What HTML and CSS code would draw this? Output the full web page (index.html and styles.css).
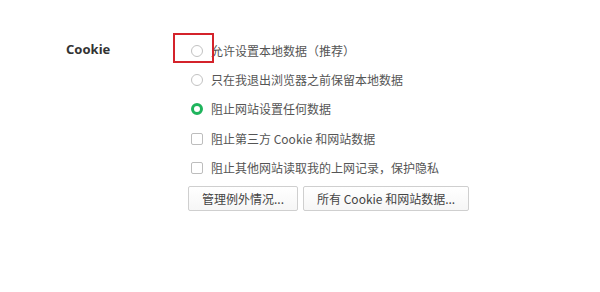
FILE: index.html
```html
<!DOCTYPE html>
<html lang="zh-CN">
<head>
<meta charset="utf-8">
<title>Cookie</title>
<link rel="stylesheet" href="styles.css">
</head>
<body>
<div class="page">
  <div class="section">
    <div class="label">Cookie</div>
    <div class="options">
      <div class="opt"><span class="radio"></span><span class="txt">允许设置本地数据（推荐）</span></div>
      <div class="opt"><span class="radio"></span><span class="txt">只在我退出浏览器之前保留本地数据</span></div>
      <div class="opt"><span class="radio checked"></span><span class="txt">阻止网站设置任何数据</span></div>
      <div class="opt"><span class="check"></span><span class="txt">阻止第三方 Cookie 和网站数据</span></div>
      <div class="opt"><span class="check"></span><span class="txt">阻止其他网站读取我的上网记录，保护隐私</span></div>
      <div class="buttons">
        <button class="btn">管理例外情况...</button>
        <button class="btn">所有 Cookie 和网站数据...</button>
      </div>
    </div>
  </div>
  <div class="mark"></div>
</div>
</body>
</html>
```
FILE: styles.css
```css
html, body {
  margin: 0;
  padding: 0;
  background: #fff;
}
body {
  font-family: "Noto Sans", "Noto Sans CJK SC", sans-serif;
  font-size: 12px;
  color: #555;
  text-spacing-trim: space-all;
}
.page {
  position: relative;
  width: 600px;
  height: 292px;
}
.section {
  display: flex;
  padding-top: 36px;
}
.label {
  width: 190px;
  padding-left: 66px;
  box-sizing: border-box;
  flex: none;
  font-size: 13px;
  font-weight: bold;
  color: #333;
  line-height: 29px;
  margin-top: -1px;
}
.options {
  display: flex;
  flex-direction: column;
}
.opt {
  display: flex;
  align-items: center;
  height: 29.3px;
  padding-left: 1px;
}
.txt {
  font-family: "Noto Sans CJK SC", sans-serif;
  line-height: 16px;
  text-spacing-trim: space-all;
}
.radio {
  width: 12px;
  height: 12px;
  box-sizing: border-box;
  border: 1px solid #c2c2c2;
  border-radius: 50%;
  margin-right: 8px;
  flex: none;
}
.radio.checked {
  border: 3px solid #1fb45c;
}
.check {
  width: 12px;
  height: 12px;
  box-sizing: border-box;
  border: 1px solid #bdbdbd;
  border-radius: 2px;
  margin-right: 8px;
  flex: none;
}
.buttons {
  display: flex;
  gap: 5px;
  margin-top: 4px;
  margin-left: -2px;
}
.btn {
  margin: 0;
  height: 25px;
  padding: 0 13px;
  font-family: "Noto Sans CJK SC", sans-serif;
  font-size: 12px;
  color: #444;
  background: linear-gradient(#ffffff, #f6f6f6);
  border: 1px solid #cfcfcf;
  border-radius: 2px;
}
.mark {
  position: absolute;
  left: 173px;
  top: 33px;
  width: 41px;
  height: 30px;
  box-sizing: border-box;
  border: 2px solid #d4232b;
}
```
